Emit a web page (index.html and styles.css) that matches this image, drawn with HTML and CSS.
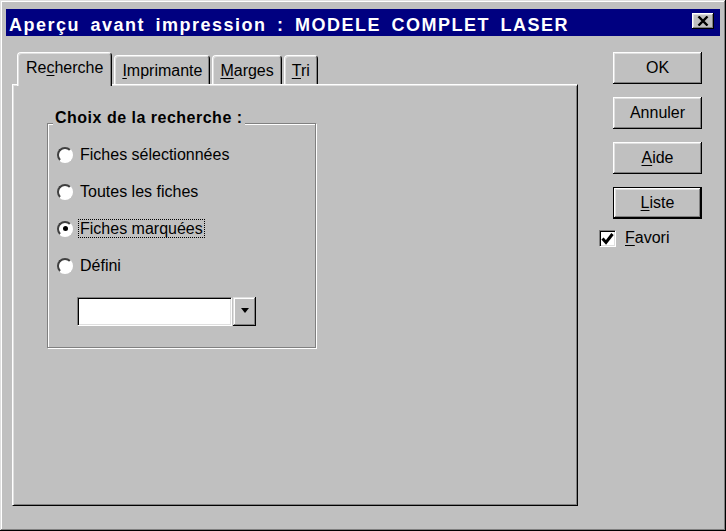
FILE: index.html
```html
<!DOCTYPE html>
<html lang="fr">
<head>
    <meta charset="UTF-8">
    <title>Aperçu avant impression</title>
    <link rel="stylesheet" href="styles.css">
</head>
<body>
    <div class="window">
        <div class="titlebar">
            <span class="title">Aperçu avant impression : MODELE COMPLET LASER</span>
            <span class="close">
                <svg width="12" height="10" viewBox="0 0 12 10">
                    <path d="M1.5 0.5 L10.5 9.5 M10.5 0.5 L1.5 9.5" stroke="#000" stroke-width="2.4" fill="none"/>
                </svg>
            </span>
        </div>
        <div class="content">
            <div class="pages">
                <div class="tabs">
                    <div class="tab active">Re<u>c</u>herche</div>
                    <div class="tab"><u>I</u>mprimante</div>
                    <div class="tab"><u>M</u>arges</div>
                    <div class="tab"><u>T</u>ri</div>
                </div>
                <div class="panel">
                    <div class="group">
                        <div class="group-title">Choix de la recherche :</div>
                        <div class="options">
                            <div class="option"><span class="radio"></span>Fiches sélectionnées</div>
                            <div class="option"><span class="radio"></span>Toutes les fiches</div>
                            <div class="option"><span class="radio checked"></span><span class="focus">Fiches marquées</span></div>
                            <div class="option"><span class="radio"></span>Défini</div>
                        </div>
                        <div class="combo">
                            <div class="combo-field"></div>
                            <div class="combo-button"><span class="arrow"></span></div>
                        </div>
                    </div>
                </div>
            </div>
            <div class="side">
                <button class="btn">OK</button>
                <button class="btn">Annuler</button>
                <button class="btn"><u>A</u>ide</button>
                <button class="btn default"><u>L</u>iste</button>
                <div class="check-row">
                    <span class="checkbox">
                        <svg width="13" height="13" viewBox="0 0 13 13">
                            <polyline points="1.5,6.5 5,10.5 11.5,2" stroke="#000" stroke-width="3" fill="none"/>
                        </svg>
                    </span>
                    <span><u>F</u>avori</span>
                </div>
            </div>
        </div>
    </div>
</body>
</html>
```

FILE: styles.css
```css
body {
    margin: 0;
    padding: 0;
    background-color: #c0c0c0;
    font-family: "Liberation Sans", Arial, sans-serif;
    font-size: 16px;
    color: #000;
}
u {
    text-underline-offset: 2px;
}
.window {
    width: 726px;
    height: 531px;
    box-sizing: border-box;
    padding: 9px 6px 0 6px;
    background-color: #c0c0c0;
    box-shadow: inset -1px -1px 0 #000, inset 1px 1px 0 #dfdfdf,
                inset -2px -2px 0 #808080, inset 2px 2px 0 #fff;
}
.titlebar {
    height: 27px;
    box-sizing: border-box;
    background-color: #000080;
    color: white;
    display: flex;
    justify-content: space-between;
    align-items: flex-start;
    padding-left: 3px;
}
.title {
    font-weight: bold;
    font-size: 18px;
    letter-spacing: 1.5px;
    word-spacing: 4px;
    line-height: 22px;
    padding-top: 5px;
    white-space: nowrap;
}
.close {
    width: 22px;
    height: 16px;
    margin: 4px 6px 0 0;
    background-color: #c0c0c0;
    display: flex;
    align-items: center;
    justify-content: center;
    box-shadow: inset -1px -1px 0 #000, inset 1px 1px 0 #fff,
                inset -2px -2px 0 #808080, inset 2px 2px 0 #dfdfdf;
}
.content {
    display: flex;
    padding: 16px 0 0 6px;
}
.pages {
    width: 566px;
}
.tabs {
    display: flex;
    align-items: flex-end;
    gap: 2px;
    height: 32px;
    padding-left: 5px;
}
.tab {
    padding: 6px 7px 4px;
    line-height: 18px;
    border-top: 1px solid #fff;
    border-left: 1px solid #fff;
    border-right: 1px solid #000;
    border-radius: 4px 4px 0 0;
    box-shadow: inset 1px 1px 0 #dfdfdf, inset -1px 0 0 #808080;
    background-color: #c0c0c0;
    white-space: nowrap;
}
.tab.active {
    padding: 6px 8px 9px;
    margin-bottom: -2px;
    position: relative;
    z-index: 1;
}
.panel {
    height: 422px;
    box-sizing: border-box;
    border: 1px solid;
    border-color: #fff #000 #000 #fff;
    box-shadow: inset 1px 1px 0 #dfdfdf, inset -1px -1px 0 #808080;
    padding: 38px 0 0 34px;
}
.group {
    width: 269px;
    height: 225px;
    box-sizing: border-box;
    border: 1px solid #808080;
    box-shadow: 1px 1px 0 #fff, inset 1px 1px 0 #fff;
}
.group-title {
    display: table;
    margin: -15px 0 0 5px;
    padding: 0 2px;
    line-height: 18px;
    font-weight: bold;
    letter-spacing: 0.5px;
    background-color: #c0c0c0;
}
.options {
    padding: 9px 0 0 9px;
}
.option {
    display: flex;
    align-items: center;
    height: 37px;
    white-space: nowrap;
}
.radio {
    width: 16px;
    height: 16px;
    box-sizing: border-box;
    margin-right: 7px;
    border-radius: 50%;
    border: 2px solid;
    border-color: #404040 #fff #fff #404040;
    background-color: #fff;
    display: flex;
    align-items: center;
    justify-content: center;
}
.radio.checked::after {
    content: "";
    width: 5px;
    height: 5px;
    border-radius: 50%;
    background-color: #000;
}
.focus {
    border: 1px dotted #000;
    padding: 0 1px;
    margin-left: -2px;
    line-height: 17px;
}
.combo {
    display: flex;
    gap: 1px;
    margin: 13px 0 0 29px;
}
.combo-field {
    width: 155px;
    height: 29px;
    box-sizing: border-box;
    border: 1px solid;
    border-color: #808080 #fff #fff #808080;
    box-shadow: inset 1px 1px 0 #000, inset -1px -1px 0 #dfdfdf;
    background-color: #fff;
}
.combo-button {
    width: 23px;
    height: 29px;
    display: flex;
    align-items: center;
    justify-content: center;
    box-shadow: inset -1px -1px 0 #000, inset 1px 1px 0 #dfdfdf,
                inset -2px -2px 0 #808080, inset 2px 2px 0 #fff;
}
.arrow {
    width: 0;
    height: 0;
    margin-top: -3px;
    border-left: 4px solid transparent;
    border-right: 4px solid transparent;
    border-top: 5px solid #000;
}
.side {
    margin-left: 35px;
    display: flex;
    flex-direction: column;
    gap: 13px;
}
.btn {
    width: 89px;
    height: 32px;
    padding: 0;
    border: none;
    background-color: #c0c0c0;
    font-family: inherit;
    font-size: 16px;
    color: #000;
    box-shadow: inset -1px -1px 0 #000, inset 1px 1px 0 #fff,
                inset -2px -2px 0 #808080, inset 2px 2px 0 #dfdfdf;
}
.btn.default {
    border: 1px solid #000;
}
.check-row {
    display: flex;
    align-items: center;
    gap: 9px;
    margin: -3px 0 0 -14px;
}
.checkbox {
    width: 17px;
    height: 17px;
    box-sizing: border-box;
    border: 1px solid;
    border-color: #808080 #fff #fff #808080;
    box-shadow: inset 1px 1px 0 #000, inset -1px -1px 0 #dfdfdf;
    background-color: #fff;
    display: flex;
    align-items: center;
    justify-content: center;
}
```
